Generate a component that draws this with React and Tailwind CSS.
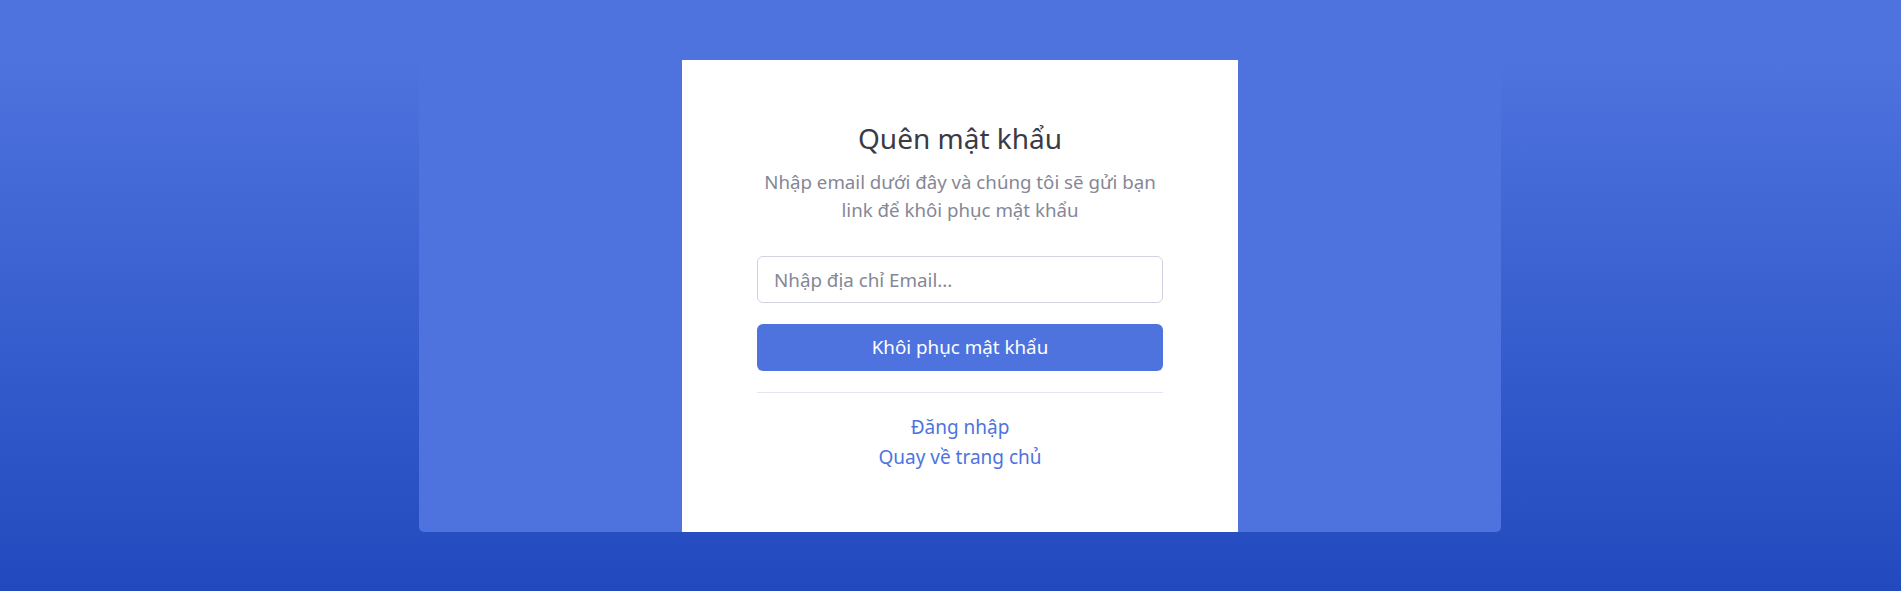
export default function App() {
  return (
    <div
      className="min-h-[591px] w-full bg-[linear-gradient(180deg,#4e73df_10%,#224abe_100%)] pt-[60px] pb-[59px]"
      style={{ fontFamily: '"Noto Sans", "Open Sans", sans-serif' }}
    >
      <div className="ml-[419px] w-[1082px] h-[472px] rounded-[5px] bg-[#4e73df] overflow-hidden flex justify-center">
        <div className="w-[556px] h-full bg-white px-[75px] pt-[60px] text-center">
          <h1 className="text-[28px] leading-[36px] text-[#3a3b45] mb-[12px]">Quên mật khẩu</h1>
          <p className="text-[18.7px] leading-[28px] text-[#858796] mb-[32px]">
            Nhập email dưới đây và chúng tôi sẽ gửi bạn
            <br />
            link để khôi phục mật khẩu
          </p>
          <form onSubmit={(e) => e.preventDefault()}>
            <input
              type="email"
              placeholder="Nhập địa chỉ Email..."
              className="block w-full h-[47px] rounded-[6px] border border-[#d1d3e2] px-[16px] text-[18.8px] text-[#6e707e] placeholder:text-[#858796] outline-none"
            />
            <button
              type="submit"
              className="mt-[21px] block w-full h-[47px] rounded-[6px] bg-[#4e73df] text-white text-[18.8px]"
            >
              Khôi phục mật khẩu
            </button>
          </form>
          <hr className="mt-[21px] mb-[19px] border-t border-[#e3e6f0]" />
          <div className="text-[19px] leading-[30px] text-[#4e73df]">
            <a href="#" className="block">Đăng nhập</a>
            <a href="#" className="block">Quay về trang chủ</a>
          </div>
        </div>
      </div>
    </div>
  );
}
